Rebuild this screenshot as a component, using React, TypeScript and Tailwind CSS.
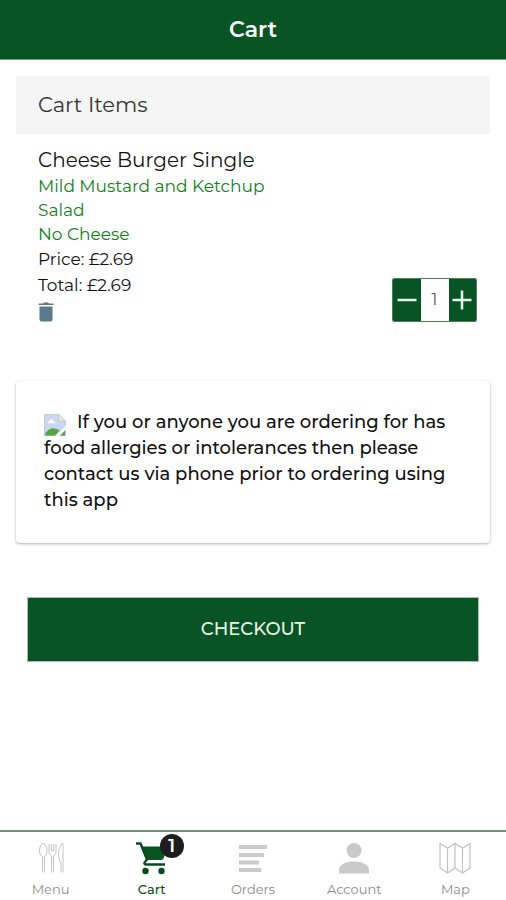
const extras = ["Mild Mustard and Ketchup", "Salad", "No Cheese"];

function TrashIcon() {
  return (
    <svg className="h-5 w-4" viewBox="0 0 16 20" fill="#5b7a8c" aria-hidden="true">
      <path d="M0.5 1.5H5L6 0.5H10L11 1.5H15.5V3H0.5Z" />
      <path d="M1.5 4.5H14.5V17.5Q14.5 19.5 12.5 19.5H3.5Q1.5 19.5 1.5 17.5Z" />
    </svg>
  );
}

function MissingImageIcon() {
  return (
    <svg className="mt-[5px] mr-[11px] -mb-1 inline-block h-[22px] w-[22px] align-top" viewBox="0 0 24 24" aria-hidden="true">
      <path d="M0.5 0.5H16L23.5 8V23.5H0.5Z" fill="#c9d7f2" stroke="#c3c5c9" strokeWidth="1" />
      <path d="M16 0.5V8H23.5Z" fill="#e8e9ec" stroke="#c3c5c9" strokeWidth="1" />
      <path d="M4 10C4 8 6 8 6 8C6 5 10 5 10.5 8C12.5 8 12.5 10 12 10Z" fill="#fff" />
      <path d="M1.5 23.5V21C6 15 11 14 17 18L12 23.5Z" fill="#55a53c" />
      <path d="M12 24.5L24.5 12V16L16 24.5Z" fill="#fff" />
      <path d="M17.5 23.500L23 18V23.500Z" fill="#55a53c" />
    </svg>
  );
}

function MenuIcon() {
  return (
    <svg className="h-8 w-8" viewBox="0 0 32 32" fill="none" stroke="#c4c4c4" strokeWidth="1" aria-hidden="true">
      <path d="M8 1C5.5 2 4.5 6 4.5 9C4.5 12 6 14 7.5 14.5V29.5Q8.5 31 9.5 29.5V14.5C11 14 12 12 12 9C12 6 10.5 2 8 1Z" />
      <path d="M14 2V9C14 12 15 13.5 16.5 14V29.5Q17.5 31 18.5 29.5V14C20.5 13.5 21 12 21 9V2M16.3 2V9H18.8V2" />
      <path d="M27.5 1C25 3 23.5 9 23.5 13C23.5 17 25 20 26 21V29.5Q27 31 28 29.5V1Z" />
    </svg>
  );
}

function CartIcon() {
  return (
    <svg className="h-8 w-8 overflow-visible" viewBox="0 0 32 32" aria-hidden="true">
      <path d="M5 4.5H31L28 15.5Q27 18 25 18H10.5Z" fill="#0a5423" />
      <path d="M0 1.5H4.5L11 17.5L8.5 20.5Q8 22.5 10.5 22.5H29" fill="none" stroke="#084a1e" strokeWidth="2.4" />
      <circle cx="9.5" cy="29" r="3.2" fill="#084a1e" />
      <circle cx="25.5" cy="29" r="3.2" fill="#084a1e" />
    </svg>
  );
}

function OrdersIcon() {
  return (
    <svg className="h-8 w-8" viewBox="0 0 32 32" fill="#cbcbcb" aria-hidden="true">
      <path d="M2 3H30V7H2ZM2 11H27V15H2ZM2 18.5H22V22.5H2ZM2 26H24.5V30H2Z" />
    </svg>
  );
}

function AccountIcon() {
  return (
    <svg className="h-8 w-8" viewBox="0 0 32 32" fill="#c9c9c9" aria-hidden="true">
      <circle cx="16" cy="8.500" r="7.500" />
      <path d="M1 31.5V28C1 22 9 19.5 16 19.5S31 22 31 28V31.5Z" />
    </svg>
  );
}

function MapIcon() {
  return (
    <svg className="h-8 w-8" viewBox="0 0 32 32" fill="none" stroke="#c2c2c2" strokeWidth="1.2" aria-hidden="true">
      <path d="M1 1.5L8.5 6L16 1.5L23.5 6L31 1.5V26L23.5 31L16 26L8.5 31L1 26ZM8.5 6V31M16 1.5V26M23.5 6V31" />
    </svg>
  );
}

const tabs = [
  { title: "Menu", icon: <MenuIcon /> },
  { title: "Cart", icon: <CartIcon />, count: 1 },
  { title: "Orders", icon: <OrdersIcon /> },
  { title: "Account", icon: <AccountIcon /> },
  { title: "Map", icon: <MapIcon /> },
];

export default function App() {
  return (
    <div className="flex min-h-screen flex-col bg-white font-['Montserrat','Inter',sans-serif] text-[#111]">
      <header className="flex h-[60px] items-center justify-center border-b border-[#6f9a7b] bg-[#095424]">
        <h1 className="text-[22px] font-semibold text-white">Cart</h1>
      </header>

      <main className="flex-1 px-4 pt-4">
        <section>
          <h2 className="rounded-t bg-[#f5f5f5] px-[22px] py-[14px] text-[21px] leading-[30px] text-[#333]">Cart Items</h2>
          <div className="flex items-end justify-between pt-3 pr-[13px] pl-[22px]">
            <div>
              <h3 className="text-[20px] leading-7">Cheese Burger Single</h3>
              <ul className="text-[17px] leading-6 text-[#0f8218]">
                {extras.map((extra) => (
                  <li key={extra}>{extra}</li>
                ))}
              </ul>
              <p className="text-[17px] leading-[26px]">Price: £2.69</p>
              <p className="text-[17px] leading-[26px]">Total: £2.69</p>
              <button type="button" aria-label="Remove item" className="mt-1 block">
                <TrashIcon />
              </button>
            </div>
            <div className="flex h-11 w-[85px] overflow-hidden rounded-xs border border-[#4f7d5c]">
              <button type="button" aria-label="Decrease quantity" className="flex flex-1 items-center justify-center bg-[#095424]">
                <svg className="h-5 w-5" viewBox="0 0 20 20" stroke="#e6f2e6" strokeWidth="2.5" aria-hidden="true">
                  <path d="M0.5 10H19.5" />
                </svg>
              </button>
              <input
                type="text"
                aria-label="Quantity"
                defaultValue="1"
                className="w-7 bg-white text-center text-base text-[#555]"
              />
              <button type="button" aria-label="Increase quantity" className="flex flex-1 items-center justify-center bg-[#095424]">
                <svg className="h-5 w-5" viewBox="0 0 20 20" stroke="#e6f2e6" strokeWidth="2.5" aria-hidden="true">
                  <path d="M0.5 10H19.5M10 0.5V19.5" />
                </svg>
              </button>
            </div>
          </div>
        </section>

        <section className="mt-[59px] rounded-sm px-7 pt-7 pb-[30px] shadow-[0_1px_3px_rgba(0,0,0,0.3)]">
          <p className="text-[18px] leading-[26px] font-medium">
            <MissingImageIcon />
            If you or anyone you are ordering for has food allergies or intolerances then please contact us via phone
            prior to ordering using this app
          </p>
        </section>

        <div className="px-[11px] pt-[54px] pb-8">
          <button
            type="button"
            className="h-[65px] w-full border border-[#a8bfae] bg-[#095424] text-[18px] font-medium text-[#e9f3ea]"
          >
            CHECKOUT
          </button>
        </div>
      </main>

      <nav className="flex border-t-2 border-[#6c9374] pt-[10px]">
        {tabs.map((tab) => (
          <a
            key={tab.title}
            href="#"
            className={
              tab.count
                ? "flex flex-1 flex-col items-center gap-1 text-[13px] leading-[22px] font-medium text-[#0a5423]"
                : "flex flex-1 flex-col items-center gap-1 text-[13px] leading-[22px] text-[#8c8c8c]"
            }
          >
            <span className="relative">
              {tab.icon}
              {tab.count && (
                <span className="absolute -top-2 -right-4 flex h-6 w-6 items-center justify-center rounded-full bg-[#1d1d1d] text-[18px] font-semibold text-white">
                  {tab.count}
                </span>
              )}
            </span>
            {tab.title}
          </a>
        ))}
      </nav>
    </div>
  );
}
